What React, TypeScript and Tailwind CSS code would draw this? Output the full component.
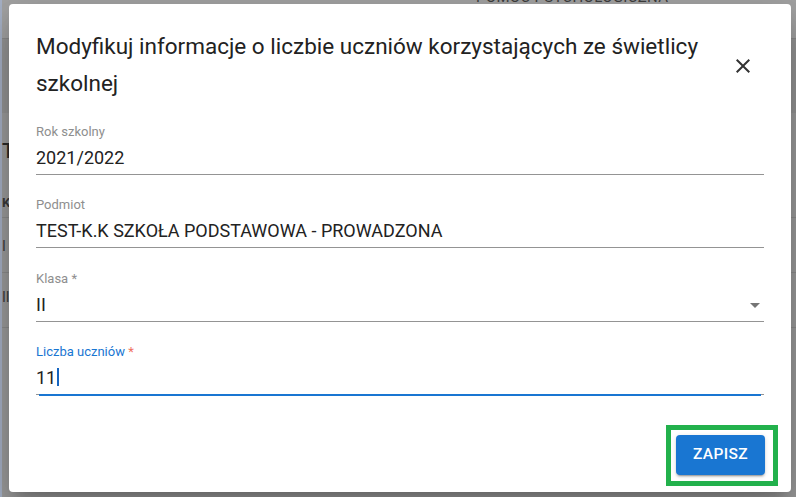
import React from "react";

function Field({
  label,
  value,
  required,
  select,
  focused,
}: {
  label: string;
  value: string;
  required?: boolean;
  select?: boolean;
  focused?: boolean;
}) {
  return (
    <div className="flex flex-col">
      <div
        className={`h-[16px] text-[13px] leading-[16px] ${
          focused ? "text-[#1976d2]" : "text-[#8e8e8e]"
        }`}
      >
        {label}
        {required && (
          <span className={focused ? "text-[#f0705f]" : "text-[#8e8e8e]"}> *</span>
        )}
      </div>
      <div className="mt-[6px] h-[29px] border-b border-[#949494] flex justify-between items-start">
        <div className="flex items-start text-[18px] leading-[24px] text-[#222]">
          {value}
          {focused && <span className="ml-[1px] mt-[2px] w-[2px] h-[18px] bg-[#1565c0]" />}
        </div>
        {select && (
          <svg viewBox="0 0 24 24" className="w-[24px] h-[24px] -mr-[3px] fill-[#757575]">
            <path d="M7 10l5 5 5-5z" />
          </svg>
        )}
      </div>
      {focused && <div className="h-[2px] -mt-[1px] mx-[3px] bg-[#1976d2]" />}
    </div>
  );
}

export default function App() {
  return (
    <div className="relative w-[796px] h-[497px] overflow-hidden bg-[#9e9e9e] font-['Roboto',sans-serif]">
      {/* ---- page under the backdrop ---- */}
      <div className="flex h-full">
        <div className="w-[2px] bg-[#a7b2c7]" />
        <div className="flex-1 flex flex-col">
          <div className="h-[39px] bg-[#a4a4a4] border-b border-[#8c8c8c] overflow-hidden">
            <div className="-mt-[14px] pl-[474px] text-[15px] tracking-[0.3px] text-[#3f3f3f]">
              POMOC PSYCHOLOGICZNA
            </div>
          </div>
          <div className="h-[74px] bg-[#979797]" />
          <div className="flex flex-col text-[#2a2a2a]">
            <div className="mt-[28px] h-[20px] text-[21px] leading-[20px] font-medium">T</div>
            <div className="mt-[32px] h-[24px] text-[13px] font-bold text-[#3a3a3a]">K</div>
            <div className="h-[55px] border-t border-[#8e8e8e] pt-[18px] text-[14px] text-[#3a3a3a]">I</div>
            <div className="h-[55px] border-t border-[#8e8e8e] pt-[14px] text-[14px] text-[#3a3a3a]">II</div>
            <div className="border-t border-[#8e8e8e]" />
          </div>
        </div>
      </div>

      {/* ---- dialog ---- */}
      <div className="absolute left-[9px] top-[4px] w-[782px] h-[488px] bg-white rounded-[4px] flex flex-col shadow-[0_11px_15px_-7px_rgba(0,0,0,0.2),0_24px_38px_3px_rgba(0,0,0,0.14),0_9px_46px_8px_rgba(0,0,0,0.12)]">
        <div className="flex items-start pt-[24px] pl-[27px] pr-[36px]">
          <h2 className="flex-1 pr-[10px] text-[22.5px] leading-[37px] text-[#222] font-normal">
            Modyfikuj informacje o liczbie uczniów korzystających ze świetlicy szkolnej
          </h2>
          <svg viewBox="0 0 24 24" className="mt-[26px] w-[24px] h-[24px] fill-[#333]">
            <path d="M19 6.41 17.59 5 12 10.59 6.41 5 5 6.41 10.59 12 5 17.59 6.41 19 12 13.41 17.59 19 19 17.59 13.41 12z" />
          </svg>
        </div>

        <div className="mt-[22px] px-[27px] flex flex-col gap-[22.4px]">
          <Field label="Rok szkolny" value="2021/2022" />
          <Field label="Podmiot" value="TEST-K.K SZKOŁA PODSTAWOWA - PROWADZONA" />
          <Field label="Klasa" value="II" required select />
          <Field label="Liczba uczniów" value="11" required focused />
        </div>

        <div className="mt-auto flex justify-end pr-[26px] pb-[17px]">
          <button className="w-[89px] h-[40px] rounded-[4px] bg-[#1976d2] text-white text-[15.5px] font-medium tracking-[0.4px] shadow-[0_3px_1px_-2px_rgba(0,0,0,0.2),0_2px_2px_0_rgba(0,0,0,0.14),0_1px_5px_0_rgba(0,0,0,0.12)]">
            ZAPISZ
          </button>
        </div>
      </div>

      {/* annotation frame */}
      <div className="absolute left-[666px] top-[425px] w-[112px] h-[61px] border-[5px] border-[#22b14c]" />
    </div>
  );
}
